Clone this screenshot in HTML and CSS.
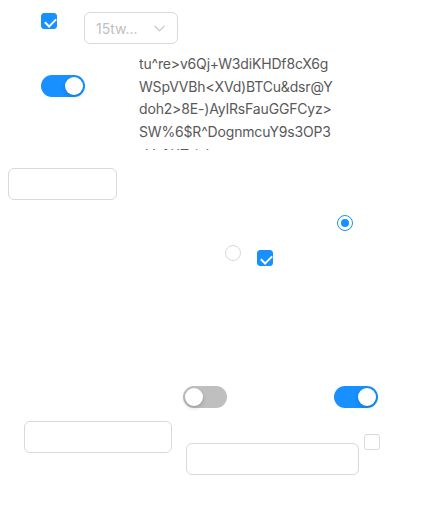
FILE: index.html
```html
<!DOCTYPE html>
<html lang="en">
<head>
<meta charset="utf-8">
<title>Widgets</title>
<link rel="stylesheet" href="styles.css">
</head>
<body>
<div class="row row1">
  <span class="checkbox checked"></span>
  <div class="select">
    <span class="select-text">15tw...</span>
    <svg class="chev" width="11" height="7" viewBox="0 0 11 7"><polyline points="0.5,0.8 5.5,5.8 10.5,0.8" fill="none" stroke="#bfbfbf" stroke-width="1.1"/></svg>
  </div>
</div>
<div class="row row2">
  <span class="switch on"><span class="knob"></span></span>
  <div class="text">
    <span class="line">tu^re&gt;v6Qj+W3diKHDf8cX6g</span>
    <span class="line">WSpVVBh&lt;XVd)BTCu&amp;dsr@Y</span>
    <span class="line">doh2&gt;8E-)AyIRsFauGGFCyz&gt;</span>
    <span class="line">SW%6$R^DognmcuY9s3OP3</span>
    <span class="line">sVe%'Tsixkuq</span>
  </div>
</div>
<div class="row row3">
  <input class="input in1" type="text">
</div>
<div class="row row4">
  <span class="radio checked"></span>
</div>
<div class="row row5">
  <span class="radio"></span>
  <span class="checkbox checked cb2"></span>
</div>
<div class="row row6">
  <span class="switch off"><span class="knob"></span></span>
  <span class="switch on sw2"><span class="knob"></span></span>
</div>
<div class="row row7">
  <input class="input in2" type="text">
  <input class="input in3" type="text">
  <span class="checkbox cb3"></span>
</div>
</body>
</html>
```

FILE: styles.css
```css
* { box-sizing: border-box; }
html, body { margin: 0; padding: 0; background: #fff; }
body {
  font-family: Inter, "Liberation Sans", sans-serif;
  font-size: 14px;
  color: #595959;
  width: 425px;
  height: 530px;
  overflow: hidden;
}
.row { display: flex; align-items: flex-start; }

.checkbox {
  display: inline-block;
  position: relative;
  width: 16px;
  height: 16px;
  border: 1px solid #d9d9d9;
  border-radius: 3px;
  background: #fff;
  flex: none;
}
.checkbox.checked { background: #1890ff; border-color: #1890ff; }
.checkbox.checked::after {
  content: "";
  position: absolute;
  left: 4.5px;
  top: 1.5px;
  width: 5px;
  height: 9px;
  border: 2px solid #fff;
  border-top: 0;
  border-left: 0;
  transform: rotate(45deg);
}

.row1 { height: 44px; padding-left: 41px; }
.row1 .checkbox { margin-top: 13px; }
.select {
  margin-left: 27px;
  margin-top: 12px;
  width: 94px;
  height: 32px;
  border: 1px solid #d9d9d9;
  border-radius: 6px;
  display: flex;
  align-items: center;
  padding: 0 12px 0 11px;
  justify-content: space-between;
}
.select-text { color: #bfbfbf; font-size: 14px; white-space: nowrap; }
.chev { display: block; }

.row2 { padding-left: 41px; }
.switch {
  position: relative;
  display: inline-block;
  width: 44px;
  height: 22px;
  border-radius: 11px;
  background: #bfbfbf;
  flex: none;
}
.switch.on { background: #1890ff; }
.switch .knob {
  position: absolute;
  top: 2px;
  left: 2px;
  width: 18px;
  height: 18px;
  border-radius: 50%;
  background: #fff;
  box-shadow: 0 2px 4px rgba(0, 35, 11, 0.2);
}
.switch.on .knob { left: 24px; }
.row2 .switch { margin-top: 31px; }
.text {
  margin-left: 54px;
  margin-top: 9px;
  width: 200px;
  height: 97px;
  overflow: hidden;
  line-height: 22.7px;
  letter-spacing: -0.17px;
}
.line { display: block; white-space: nowrap; }

.input {
  display: block;
  height: 32px;
  border: 1px solid #d9d9d9;
  border-radius: 6px;
  background: #fff;
  padding: 4px 11px;
  font: inherit;
  outline: none;
  margin: 0;
}
.row3 { margin-top: 18px; padding-left: 8px; }
.in1 { width: 109px; }

.radio {
  position: relative;
  display: inline-block;
  width: 16px;
  height: 16px;
  border: 1px solid #d9d9d9;
  border-radius: 50%;
  background: #fff;
  flex: none;
}
.radio.checked { border-color: #1890ff; }
.radio.checked::after {
  content: "";
  position: absolute;
  left: 3px;
  top: 3px;
  width: 8px;
  height: 8px;
  border-radius: 50%;
  background: #1890ff;
}
.row4 { margin-top: 15px; padding-left: 337px; }
.row5 { margin-top: 14px; padding-left: 225px; }
.cb2 { margin-left: 16px; margin-top: 5px; }

.row6 { margin-top: 120px; padding-left: 183px; }
.sw2 { margin-left: 107px; }

.row7 { margin-top: 13px; padding-left: 24px; }
.in2 { width: 148px; }
.in3 { width: 173px; margin-left: 14px; margin-top: 22px; }
.cb3 { margin-left: 5px; margin-top: 13px; }
```
